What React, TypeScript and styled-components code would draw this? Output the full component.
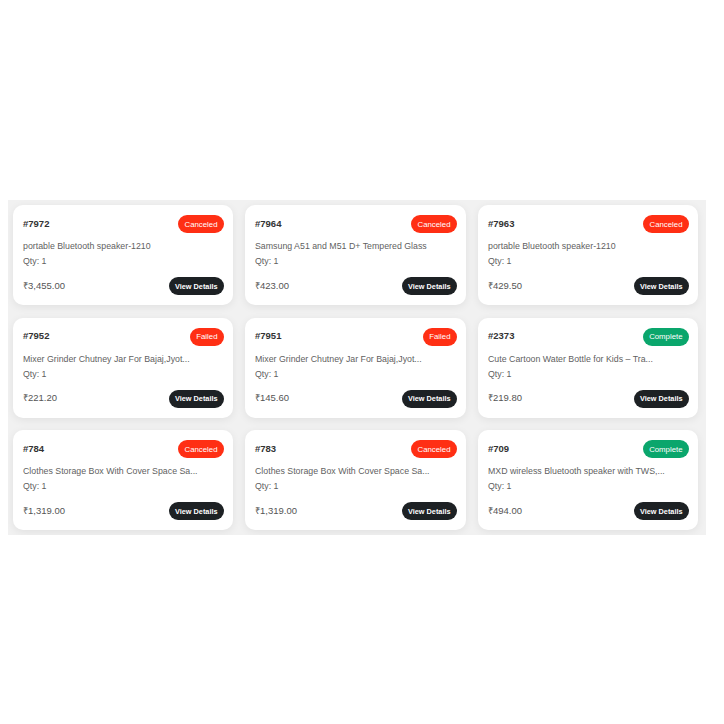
import React from "react";
import styled, { createGlobalStyle } from "styled-components";

const Global = createGlobalStyle`
  html, body { margin: 0; padding: 0; background: #ffffff; }
  body { margin: 8px; font-family: "Liberation Sans", Arial, sans-serif; }
`;

const Page = styled.div`
  padding-top: 192px;
`;

const Grid = styled.div`
  width: 698px;
  box-sizing: border-box;
  background: #f1f1f1;
  padding: 5px 8px 5px 5px;
  display: grid;
  grid-template-columns: 220px 221px 220px;
  column-gap: 12px;
  row-gap: 12.5px;
`;

const Card = styled.div`
  background: #ffffff;
  border-radius: 10px;
  box-shadow: 0 2px 8px rgba(0, 0, 0, 0.07);
  padding: 10px 9px 10px 10px;
  height: 100px;
  box-sizing: border-box;
  display: flex;
  flex-direction: column;
`;

const Header = styled.div`
  display: flex;
  align-items: center;
  justify-content: space-between;
  height: 18px;
`;

const OrderId = styled.span`
  font-size: 9.5px;
  font-weight: 700;
  color: #333333;
  margin-top: -2px;
`;

const Badge = styled.span<{ $tone: "red" | "green" }>`
  display: inline-flex;
  align-items: center;
  justify-content: center;
  height: 18px;
  padding: 0 6.5px;
  border-radius: 9px;
  font-size: 7.8px;
  color: #ffffff;
  background: ${(p) => (p.$tone === "red" ? "#ff2f14" : "#0aa66c")};
`;

const Name = styled.div`
  margin-top: 6px;
  font-size: 8.8px;
  line-height: 14px;
  color: #5f5f5f;
  white-space: nowrap;
`;

const Qty = styled.div`
  font-size: 8.8px;
  line-height: 16px;
  color: #5f5f5f;
`;

const Footer = styled.div`
  margin-top: auto;
  display: flex;
  align-items: center;
  justify-content: space-between;
  height: 18px;
`;

const Price = styled.span`
  font-size: 9.5px;
  color: #555555;
  margin-top: -2px;
`;

const Button = styled.button`
  height: 18px;
  padding: 0 6.5px;
  border: none;
  border-radius: 9px;
  background: #1d2124;
  color: #ffffff;
  font-family: "Liberation Sans", Arial, sans-serif;
  font-size: 7.3px;
  font-weight: 700;
  cursor: pointer;
`;

type Order = {
  id: string;
  status: "Canceled" | "Failed" | "Complete";
  name: string;
  price: string;
};

const orders: Order[] = [
  { id: "#7972", status: "Canceled", name: "portable Bluetooth speaker-1210", price: "₹3,455.00" },
  { id: "#7964", status: "Canceled", name: "Samsung A51 and M51 D+ Tempered Glass", price: "₹423.00" },
  { id: "#7963", status: "Canceled", name: "portable Bluetooth speaker-1210", price: "₹429.50" },
  { id: "#7952", status: "Failed", name: "Mixer Grinder Chutney Jar For Bajaj,Jyot...", price: "₹221.20" },
  { id: "#7951", status: "Failed", name: "Mixer Grinder Chutney Jar For Bajaj,Jyot...", price: "₹145.60" },
  { id: "#2373", status: "Complete", name: "Cute Cartoon Water Bottle for Kids – Tra...", price: "₹219.80" },
  { id: "#784", status: "Canceled", name: "Clothes Storage Box With Cover Space Sa...", price: "₹1,319.00" },
  { id: "#783", status: "Canceled", name: "Clothes Storage Box With Cover Space Sa...", price: "₹1,319.00" },
  { id: "#709", status: "Complete", name: "MXD wireless Bluetooth speaker with TWS,...", price: "₹494.00" },
];

export default function App() {
  return (
    <>
      <Global />
      <Page>
        <Grid>
          {orders.map((o) => (
            <Card key={o.id}>
              <Header>
                <OrderId>{o.id}</OrderId>
                <Badge $tone={o.status === "Complete" ? "green" : "red"}>{o.status}</Badge>
              </Header>
              <Name>{o.name}</Name>
              <Qty>Qty: 1</Qty>
              <Footer>
                <Price>{o.price}</Price>
                <Button>View Details</Button>
              </Footer>
            </Card>
          ))}
        </Grid>
      </Page>
    </>
  );
}
